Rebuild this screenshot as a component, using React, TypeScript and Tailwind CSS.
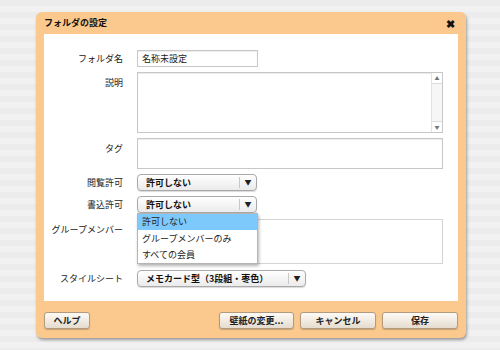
import type { ReactNode } from "react";

const font = { fontFamily: '"Noto Sans CJK JP", "Noto Sans", sans-serif' };

function Label({ children, center }: { children: ReactNode; center?: boolean }) {
  return (
    <div
      className={`w-[79px] shrink-0 text-right text-[9px] leading-[17px] text-[#222] ${
        center ? "" : "pt-[2px]"
      }`}
    >
      {children}
    </div>
  );
}

function Select({ value, width }: { value: string; width: string }) {
  return (
    <div
      className={`${width} flex h-[17px] items-center rounded-[4px] border border-[#a9a9a9] bg-gradient-to-b from-white to-[#ebebeb] shadow-[0_1px_1px_rgba(0,0,0,0.15)]`}
    >
      <span className="flex-1 pl-[8px] text-[9px] font-bold leading-none text-[#111]">
        {value}
      </span>
      <span className="h-[11px] w-px bg-[#c8c8c8]" />
      <span className="flex w-[16px] items-center justify-center text-[7px] leading-none text-[#222]">
        ▼
      </span>
    </div>
  );
}

function Button({ label, width }: { label: string; width: string }) {
  return (
    <button
      className={`${width} h-[17px] rounded-[3px] border border-[#b29a7e] bg-gradient-to-b from-[#fdfaf5] to-[#e5dccf] text-[9px] font-bold leading-none text-[#222] shadow-[0_1px_1px_rgba(0,0,0,0.2)]`}
    >
      {label}
    </button>
  );
}

export default function App() {
  return (
    <div
      className="h-[350px] w-[500px] bg-[repeating-linear-gradient(180deg,#ececec_0px,#ececec_6px,#f1f1f1_6px,#f1f1f1_12px)] pl-[36px] pt-[12px]"
      style={font}
    >
      <div className="w-[430px] rounded-[6px] bg-[#fbc98d] px-[8px] pb-[9px] shadow-[1px_2px_3px_rgba(0,0,0,0.35)]">
        {/* header */}
        <div className="flex h-[22px] items-center justify-between">
          <span className="text-[9px] font-bold text-[#111]">フォルダの設定</span>
          <span className="pr-[3px] text-[11px] font-bold leading-none text-[#111]">✖</span>
        </div>

        {/* body */}
        <div className="flex h-[267px] flex-col gap-[5px] bg-white pt-[16px]">
          <div className="flex items-start gap-[14px]">
            <Label center>フォルダ名</Label>
            <div className="flex h-[17px] w-[121px] items-center border border-[#c7c7c7] px-[4px] text-[9px] text-[#222] shadow-[inset_0_1px_1px_rgba(0,0,0,0.08)]">
              名称未設定
            </div>
          </div>

          <div className="flex items-start gap-[14px]">
            <Label>説明</Label>
            <div className="flex h-[61px] w-[306px] border border-[#c7c7c7] shadow-[inset_0_1px_1px_rgba(0,0,0,0.08)]">
              <div className="flex-1" />
              <div className="flex w-[11px] flex-col border-l border-[#e2e2e2] bg-[#f6f6f6]">
                <div className="flex h-[11px] items-center justify-center border-b border-[#dcdcdc] bg-white text-[5px] text-[#777]">
                  ▲
                </div>
                <div className="flex-1" />
                <div className="flex h-[11px] items-center justify-center border-t border-[#dcdcdc] bg-white text-[5px] text-[#777]">
                  ▼
                </div>
              </div>
            </div>
          </div>

          <div className="flex items-start gap-[14px]">
            <Label>タグ</Label>
            <div className="h-[31px] w-[306px] border border-[#c7c7c7] shadow-[inset_0_1px_1px_rgba(0,0,0,0.08)]" />
          </div>

          <div className="flex items-start gap-[14px]">
            <Label center>閲覧許可</Label>
            <Select value="許可しない" width="w-[120px]" />
          </div>

          <div className="relative flex items-start gap-[14px]">
            <Label center>書込許可</Label>
            <Select value="許可しない" width="w-[120px]" />
            <div className="absolute left-[93px] top-[17px] z-10 w-[121px] border border-[#b5b5b5] bg-white shadow-[1px_2px_3px_rgba(0,0,0,0.3)]">
              <div className="flex h-[16px] items-center bg-[#7ec9fb] pl-[4px] text-[9px] text-[#222]">
                許可しない
              </div>
              <div className="flex h-[17px] items-center pl-[4px] text-[9px] text-[#222]">
                グループメンバーのみ
              </div>
              <div className="flex h-[16px] items-center pl-[4px] text-[9px] text-[#222]">
                すべての会員
              </div>
            </div>
          </div>

          <div className="flex items-start gap-[14px] pt-[1px]">
            <Label>グループメンバー</Label>
            <div className="h-[45px] w-[306px] border border-[#d4d4d4]" />
          </div>

          <div className="flex items-start gap-[14px] pt-[1px]">
            <Label center>スタイルシート</Label>
            <Select value="メモカード型（3段組・枣色）" width="w-[169px]" />
          </div>
        </div>

        {/* footer */}
        <div className="flex items-center pt-[11px]">
          <Button label="ヘルプ" width="w-[46px]" />
          <div className="flex-1" />
          <div className="flex gap-[6px]">
            <Button label="壁紙の変更..." width="w-[75px]" />
            <Button label="キャンセル" width="w-[76px]" />
            <Button label="保存" width="w-[76px]" />
          </div>
        </div>
      </div>
    </div>
  );
}
